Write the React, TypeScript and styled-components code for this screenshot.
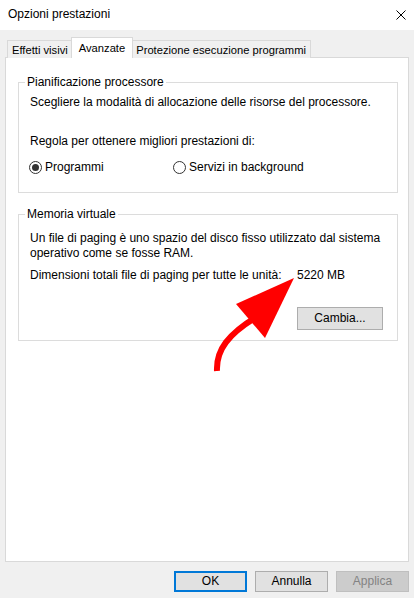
import React from "react";
import styled, { createGlobalStyle } from "styled-components";

const Global = createGlobalStyle`
  html, body { margin: 0; padding: 0; background: #f0f0f0; }
  body { font-family: "Liberation Sans", Arial, sans-serif; font-size: 12px; line-height: 15px; color: #000; }
  * { box-sizing: border-box; }
`;

const Window = styled.div`
  position: relative;
  width: 414px;
  height: 598px;
  display: flex;
  flex-direction: column;
  background: #f0f0f0;
  overflow: hidden;
`;

const TitleBar = styled.div`
  height: 30px;
  background: #fff;
  display: flex;
  align-items: center;
  justify-content: space-between;
  padding: 0 8px 1px 8px;
  flex: none;
`;

const Title = styled.span`
  font-size: 12px;
`;

const CloseButton = styled.div`
  width: 10px;
  height: 10px;
  display: flex;
`;

const Content = styled.div`
  flex: 1;
  display: flex;
  flex-direction: column;
  padding: 7px 5px 0 5px;
`;

const TabStrip = styled.div`
  display: flex;
  align-items: flex-end;
  height: 21px;
  padding-left: 2px;
  margin-bottom: -1px;
  position: relative;
  z-index: 1;
`;

const Tab = styled.div<{ $active?: boolean }>`
  height: ${(p) => (p.$active ? "21px" : "18px")};
  border: 1px solid #d9d9d9;
  border-bottom: none;
  background: ${(p) => (p.$active ? "#fff" : "#f0f0f0")};
  padding: ${(p) => (p.$active ? "1px 7px 0" : "1px 4px 0")};
  margin: ${(p) => (p.$active ? "0 -2px" : "0")};
  position: relative;
  z-index: ${(p) => (p.$active ? 2 : 1)};
  display: flex;
  align-items: center;
  white-space: nowrap;
  font-size: 11.2px;
  & + & { border-left: ${(p) => (p.$active ? "1px solid #d9d9d9" : "none")}; }
`;

const Panel = styled.div`
  flex: 1;
  background: #fff;
  border: 1px solid #d9d9d9;
  padding: 16px 10px 0 12px;
  display: flex;
  flex-direction: column;
`;

const Group = styled.fieldset<{ $gap?: number; $bottom: number }>`
  margin: ${(p) => p.$gap ?? 0}px 0 0 0;
  border: 1px solid #dcdcdc;
  padding: 5px 11px ${(p) => p.$bottom}px 11px;
  min-width: 0;
`;

const Legend = styled.legend`
  padding: 0 2px;
  margin-left: -5px;
  line-height: 16px;
`;

const Line = styled.div<{ $top?: number }>`
  margin-top: ${(p) => p.$top ?? 0}px;
  white-space: nowrap;
`;

const RadioRow = styled.div`
  display: flex;
  margin-top: 10px;
  height: 16px;
  align-items: center;
`;

const RadioLabel = styled.label<{ $width?: number }>`
  display: flex;
  align-items: center;
  gap: 3px;
  width: ${(p) => (p.$width ? `${p.$width}px` : "auto")};
  margin-left: -1px;
`;

const RadioCircle = styled.span<{ $checked?: boolean }>`
  width: 13px;
  height: 13px;
  border-radius: 50%;
  border: 1px solid #333;
  display: flex;
  align-items: center;
  justify-content: center;
  flex: none;
  &::after {
    content: "";
    width: 7px;
    height: 7px;
    border-radius: 50%;
    background: ${(p) => (p.$checked ? "#333" : "transparent")};
  }
`;

const InfoRow = styled.div`
  display: grid;
  grid-template-columns: 267px auto;
  margin-top: 7px;
  white-space: nowrap;
`;

const ButtonRow = styled.div<{ $top?: number }>`
  display: flex;
  justify-content: flex-end;
  margin-top: ${(p) => p.$top ?? 0}px;
  padding-right: 3px;
`;

const Button = styled.button<{ $variant?: "primary" | "disabled"; $w: number; $h: number }>`
  width: ${(p) => p.$w}px;
  height: ${(p) => p.$h}px;
  font-family: inherit;
  font-size: 12px;
  color: ${(p) => (p.$variant === "disabled" ? "#838383" : "#000")};
  background: ${(p) => (p.$variant === "disabled" ? "#cccccc" : "#e1e1e1")};
  border: ${(p) =>
    p.$variant === "primary" ? "2px solid #0078d7" : p.$variant === "disabled" ? "1px solid #bfbfbf" : "1px solid #adadad"};
  padding: 0;
  border-radius: 0;
  line-height: 15px;
`;

const Footer = styled.div`
  height: 36px;
  flex: none;
  display: flex;
  justify-content: flex-end;
  align-items: flex-start;
  gap: 8px;
  padding: 9px 5px 0 0;
`;

const Overlay = styled.svg`
  position: absolute;
  left: 0;
  top: 0;
  pointer-events: none;
`;

export default function App() {
  return (
    <>
      <Global />
      <Window>
        <TitleBar>
          <Title>Opzioni prestazioni</Title>
          <CloseButton>
            <svg width="10" height="10" viewBox="0 0 10 10">
              <path d="M0.5 0.5 L9.5 9.5 M9.5 0.5 L0.5 9.5" stroke="#000" strokeWidth="1" fill="none" />
            </svg>
          </CloseButton>
        </TitleBar>
        <Content>
          <TabStrip>
            <Tab>Effetti visivi</Tab>
            <Tab $active>Avanzate</Tab>
            <Tab>Protezione esecuzione programmi</Tab>
          </TabStrip>
          <Panel>
            <Group $bottom={17}>
              <Legend>Pianificazione processore</Legend>
              <Line>Scegliere la modalità di allocazione delle risorse del processore.</Line>
              <Line $top={24}>Regola per ottenere migliori prestazioni di:</Line>
              <RadioRow>
                <RadioLabel $width={145}>
                  <RadioCircle $checked />
                  Programmi
                </RadioLabel>
                <RadioLabel>
                  <RadioCircle />
                  Servizi in background
                </RadioLabel>
              </RadioRow>
            </Group>
            <Group $gap={13} $bottom={10}>
              <Legend>Memoria virtuale</Legend>
              <Line $top={4}>
                Un file di paging è uno spazio del disco fisso utilizzato dal sistema
                <br />
                operativo come se fosse RAM.
              </Line>
              <InfoRow>
                <span>Dimensioni totali file di paging per tutte le unità:</span>
                <span>5220 MB</span>
              </InfoRow>
              <ButtonRow $top={24}>
                <Button $w={86} $h={23}>Cambia...</Button>
              </ButtonRow>
            </Group>
          </Panel>
        </Content>
        <Footer>
          <Button $variant="primary" $w={73} $h={21}>OK</Button>
          <Button $w={73} $h={21}>Annulla</Button>
          <Button $variant="disabled" $w={73} $h={21}>Applica</Button>
        </Footer>
        <Overlay width="414" height="598" viewBox="0 0 414 598">
          <path d="M217 371 C216 350 228 334 258 316" stroke="#ff0000" strokeWidth="6" fill="none" />
          <polygon points="294,278 236,304 265,338" fill="#ff0000" />
        </Overlay>
      </Window>
    </>
  );
}
